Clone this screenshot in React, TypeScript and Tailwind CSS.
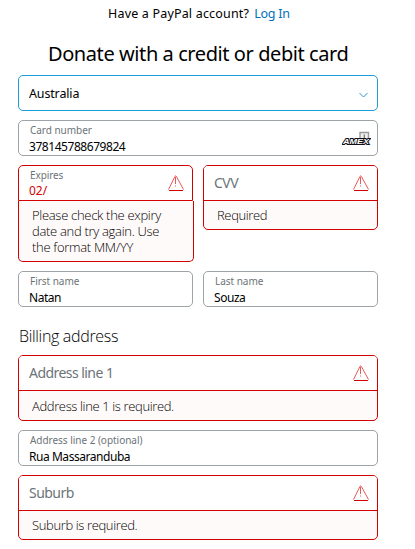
import type { ReactNode } from "react";

function Warning() {
  return (
    <svg className="h-4 w-4 shrink-0" viewBox="0 0 16 16" fill="none" stroke="#e65a5a" strokeWidth="1">
      <path d="M.5 14.5 7 1.3Q7.6.3 8.3 1.3L15.5 14.5" />
      <path d="M7.5 2v7M7.5 10.5v1" />
      <path d="M1 15.5h14" stroke="#d20000" />
    </svg>
  );
}

function AmexMark() {
  return (
    <svg className="h-4 w-[29px]" viewBox="0 0 29 16">
      <path d="M18 1.5h8.5v10H18z" fill="#eee" stroke="#999" strokeWidth="1.4" />
      <path d="M22.3 3.5v5" stroke="#777" strokeWidth="1.3" />
      <text x="1" y="12.5" textLength="26" lengthAdjust="spacingAndGlyphs" fontSize="7.5" fontWeight="900" fontStyle="italic" fontFamily="Liberation Sans, Arial, sans-serif" fill="#fff" stroke="#101018" strokeWidth="1.8" paintOrder="stroke">
        AMEX
      </text>
    </svg>
  );
}

function Filled({ label, value, icon }: { label: string; value: ReactNode; icon?: ReactNode }) {
  return (
    <div className="flex h-9 justify-between rounded-[5px] border border-[#9da3a6] pl-[11px] pr-[6px]">
      <div className="pt-[2px]">
        <div className="text-[10px] leading-[14px] tracking-[-0.03px] text-[#6c7378]">{label}</div>
        <div className="-ml-px mt-[2px] text-[12px] leading-4 tracking-[-0.45px]">{value}</div>
      </div>
      {icon}
    </div>
  );
}

function ErrorField({ label, message, tall = false }: { label: string; message: ReactNode; tall?: boolean }) {
  return (
    <div className="rounded-[5px] border border-[#d20000] bg-[#fffafa]">
      <div className="flex h-[35px] items-center justify-between rounded-t-[4px] border-b border-[#d20000] bg-white pl-[10px] pr-[8px] text-[#6c7378]">
        <span className="text-[14px] leading-5 tracking-[-0.55px]">{label}</span>
        <Warning />
      </div>
      <div className={`${tall ? "h-[29px] pt-[7px]" : "h-7 pt-[6px]"} pl-[13px] font-['Open_Sans'] text-[13px] font-light leading-4 tracking-[-0.37px]`}>{message}</div>
    </div>
  );
}

export default function App() {
  return (
    <main className="h-[549px] w-[415px] overflow-hidden bg-white pl-[18px] pr-[37px] font-['Noto_Sans',sans-serif] text-black">
      <p className="pl-[90px] pt-[6px] text-[12.5px] leading-4 tracking-[0.18px] whitespace-nowrap">
        <span>Have a PayPal account?</span>
        <a className="ml-[5px] tracking-[-0.25px] text-[#0070ba]">Log In</a>
      </p>
      <h1 className="mt-[19px] pl-[30px] text-[20px] leading-[26px] tracking-[-0.42px] whitespace-nowrap">Donate with a credit or debit card</h1>
      <div className="mt-2 flex h-9 items-center justify-between rounded-[5px] border border-[#1c9cd8] pl-[10px] pr-[9px]">
        <span className="pt-px text-[12.5px] leading-4 tracking-[-0.15px]">Australia</span>
        <svg className="mt-[3px] h-[6px] w-[9px]" viewBox="0 0 9 6" fill="none" stroke="#2997cf">
          <path d="m.5 1 4 4 4-4" />
        </svg>
      </div>
      <div className="mt-[9px]">
        <Filled label="Card number" value={<span>378145788679824</span>} icon={<div className="pt-[10px]"><AmexMark /></div>} />
      </div>
      <div className="mt-[9px] flex items-start gap-[10px]">
        <div className="w-[175px]">
          <div className="flex h-9 justify-between rounded-t-[5px] border border-[#d20000] pl-[11px] pr-[8px]">
            <div className="pt-[2px]">
              <div className="text-[10px] leading-[14px] tracking-[-0.1px] text-[#6c7378]">Expires</div>
              <div className="-ml-px mt-px text-[12px] leading-4 text-[#d20000]">02/</div>
            </div>
            <div className="pt-[9px]"><Warning /></div>
          </div>
          <div className="h-[61px] w-[176px] whitespace-pre-line rounded-b-[5px] border border-t-0 border-[#d20000] bg-[#fffafa] pl-[13px] pt-[6px] font-['Open_Sans'] text-[13px] font-light leading-4 tracking-[-0.3px]">
            {"Please check the expiry\ndate and try again. Use\nthe format MM/YY"}
          </div>
        </div>
        <div className="w-[175px]">
          <ErrorField label="CVV" message="Required" />
        </div>
      </div>
      <div className="mt-[9px] grid grid-cols-2 gap-[10px]">
        <Filled label="First name" value="Natan" />
        <Filled label="Last name" value="Souza" />
      </div>
      <h2 className="mt-[19px] pl-px font-['Open_Sans'] text-[16px] font-light leading-5 tracking-[-0.32px]">Billing address</h2>
      <div className="mt-[9px] flex flex-col gap-[9px]">
        <ErrorField label="Address line 1" message="Address line 1 is required." tall />
        <Filled label="Address line 2 (optional)" value="Rua Massaranduba" />
        <ErrorField label="Suburb" message="Suburb is required." />
      </div>
    </main>
  );
}
